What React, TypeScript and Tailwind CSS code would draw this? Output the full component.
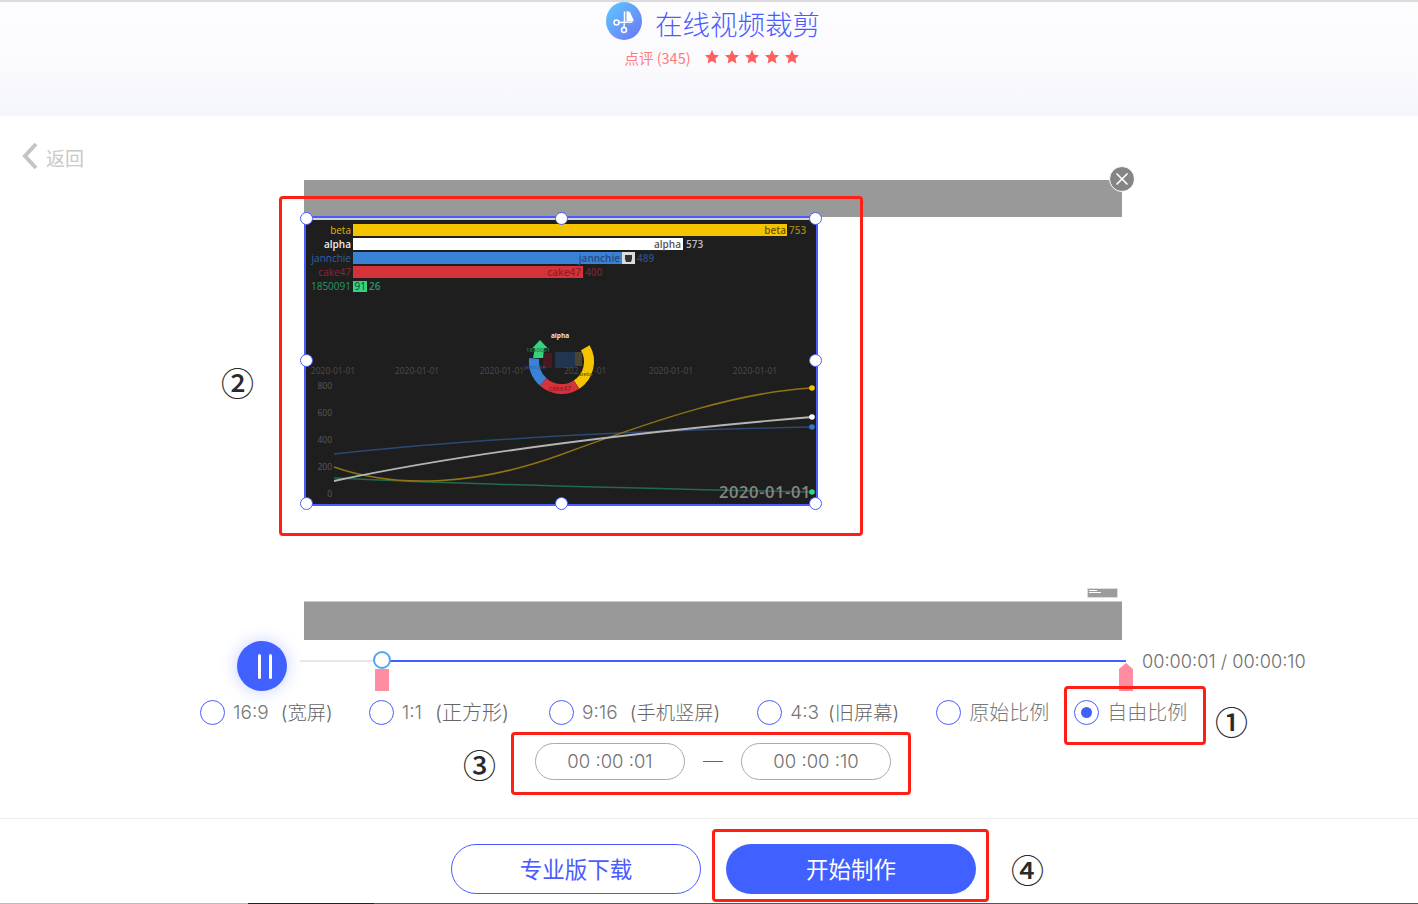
import React from "react";
import { X } from "lucide-react";

const ratios = [
  { label: "16:9", note: "(宽屏)", noteCls: "ml-[12px] text-[19.3px]", cls: "mr-[36px]" },
  { label: "1:1", note: "(正方形)", noteCls: "ml-[13px] text-[20px]", cls: "mr-[40px]" },
  { label: "9:16", note: "(手机竖屏)", noteCls: "ml-[12px] text-[19.3px]", cls: "mr-[37px]" },
  { label: "4:3", note: "(旧屏幕)", noteCls: "ml-[9px] text-[19.3px]", cls: "mr-[37px]" },
  { label: "原始比例", note: "", noteCls: "", cls: "mr-[25px]" },
  { label: "自由比例", note: "", noteCls: "", cls: "", active: true },
];

const handles = [
  "left-[-4px] top-[32px]",
  "left-[251px] top-[32px]",
  "left-[505px] top-[32px]",
  "left-[-4px] top-[174px]",
  "left-[505px] top-[174px]",
  "left-[-4px] top-[317px]",
  "left-[251px] top-[317px]",
  "left-[505px] top-[317px]",
];

const Star = () => (
  <svg width="16" height="16" viewBox="0 0 24 24" className="fill-[#ff5f5f]">
    <path d="M12 1.5l3.2 7 7.3.8-5.4 5 1.5 7.6L12 18.1l-6.6 3.8 1.5-7.6-5.4-5 7.3-.8z" />
  </svg>
);

const Logo = () => (
  <svg width="36" height="38" viewBox="0 0 36 38">
    <defs>
      <linearGradient id="logo" x1="0" y1="0" x2="1" y2="1">
        <stop offset="0" stopColor="#5ccbff" />
        <stop offset="1" stopColor="#6f72f6" />
      </linearGradient>
    </defs>
    <ellipse cx="18" cy="19" rx="18" ry="19" fill="url(#logo)" />
    <path d="M20.5 9l3.5 1 4 9h-7.5z" fill="#fff" />
    <path d="M18.5 9.5v10.500" stroke="#fff" strokeWidth="1.5" fill="none" />
    <path d="M12.500 20.500l14 -.5M18.500 20l-.5 5" stroke="#fff" strokeWidth="1.5" fill="none" />
    <circle cx="10.500" cy="20.500" r="2.500" stroke="#fff" strokeWidth="1.500" fill="none" />
    <circle cx="18" cy="28" r="2.500" stroke="#fff" strokeWidth="1.500" fill="none" />
  </svg>
);

// the video frame is a picture: everything in here is in page coordinates
const VideoFrame = () => (
  <svg width="513" height="288" viewBox="304 217 513 288" className="block bg-[#1f1e1f]" fontFamily="'Open Sans', sans-serif">
    <rect x="304" y="217" width="513" height="3" fill="#d4d4d4" />
    <rect x="353" y="224" width="434" height="12" fill="#f5c400" />
    <rect x="353" y="238" width="330" height="12" fill="#fff" />
    <rect x="353" y="252" width="270" height="12" fill="#3a82d6" />
    <rect x="622" y="252" width="13" height="12" fill="#dcdcdc" />
    <path d="M625 255h7v4l-1 3h-5l-1-3z" fill="#333" />
    <rect x="353" y="266" width="230" height="12" fill="#d5323a" />
    <rect x="353" y="281" width="14" height="11" fill="#35d27f" />

    <g fontSize="10" textAnchor="end">
      <text x="351" y="234" fill="#e0b400">beta</text>
      <text x="351" y="248" fill="#eeeeee" fontWeight="600">alpha</text>
      <text x="351" y="262" fill="#2f62a5">jannchie</text>
      <text x="351" y="276" fill="#8f2530">cake47</text>
      <text x="351" y="290" fill="#2a9a62">1850091</text>
      <text x="366" y="290" fill="#17442d">91</text>
      <text x="786" y="234" fill="#6d5a00" fontWeight="600">beta</text>
      <text x="681" y="248" fill="#555" fontWeight="600">alpha</text>
      <text x="620" y="262" fill="#234c80" fontWeight="600">jannchie</text>
      <text x="581" y="276" fill="#8f2028" fontWeight="600">cake47</text>
    </g>
    <g fontSize="10" fontWeight="600">
      <text x="789" y="234" fill="#9a8318">753</text>
      <text x="686" y="248" fill="#bdbdbd">573</text>
      <text x="637" y="262" fill="#2c4f80">489</text>
      <text x="585" y="276" fill="#7d222b">400</text>
      <text x="369" y="290" fill="#2a9a62">26</text>
    </g>

    <g fontSize="8.500" fill="#4c4c4c" textAnchor="middle">
      <text x="333" y="374">2020-01-01</text>
      <text x="417" y="374">2020-01-01</text>
      <text x="502" y="374">2020-01-01</text>
      <text x="671" y="374">2020-01-01</text>
      <text x="755" y="374">2020-01-01</text>
    </g>
    <g fontSize="8.500" fill="#5a5a5a" textAnchor="end">
      <text x="332" y="389">800</text>
      <text x="332" y="416">600</text>
      <text x="332" y="443">400</text>
      <text x="332" y="470">200</text>
      <text x="332" y="497">0</text>
    </g>

    <g fill="none" strokeWidth="1.500">
      <path d="M334 454C480 438 660 430 812 427" stroke="#2a4a73" />
      <path d="M334 478C480 485 660 489 812 492" stroke="#23694a" />
      <path d="M334 467C400 490 480 484 560 455C660 418 740 392 812 388" stroke="#8d7414" />
      <path d="M334 481C480 450 660 430 812 417" stroke="#b5b5b5" strokeWidth="1.800" />
    </g>
    <circle cx="812" cy="388" r="2.800" fill="#f5c400" />
    <circle cx="812" cy="417" r="2.800" fill="#fff" />
    <circle cx="812" cy="427" r="2.800" fill="#2f7bc8" />
    <circle cx="812" cy="492" r="2.800" fill="#35d27f" />
    <text x="719" y="498" fontSize="16.500" fontWeight="600" letterSpacing="0.600" fill="#858585">2020-01-01</text>

    {/* little donut in the middle of the frame */}
    <rect x="543" y="353" width="9" height="15" fill="#4a1a22" />
    <rect x="555" y="352" width="20" height="16" fill="#1f3550" />
    <rect x="575" y="352" width="7" height="14" fill="#4a4530" />
    <g fill="none" strokeWidth="10">
      <path d="M585.300 347.750A27.500 27.500 0 0 1 576.600 384.600" stroke="#f5c400" />
      <path d="M576.600 384.600A27.500 27.500 0 0 1 543.100 381.900" stroke="#d5323a" />
      <path d="M543.100 381.900A27.500 27.500 0 0 1 534.100 358.600" stroke="#3a82d6" />
    </g>
    <path d="M540 340l7.500 8H544l-1 10h-10l2-10h-2.500z" fill="#35d27f" />
    <text x="560" y="338" fontSize="6.500" fontWeight="700" fill="#e8e8e8" textAnchor="middle">alpha</text>
    <text x="538" y="352" fontSize="6" fontWeight="600" fill="#1f7a4c" textAnchor="middle">1850091</text>
    <text x="535" y="369" fontSize="5.500" fill="#2a5fa8" textAnchor="middle">jannchie</text>
    <text x="560" y="391" fontSize="6.500" fontWeight="600" fill="#8f2028" textAnchor="middle">cake47</text>
    {/* the donut's label sits in the middle of this date tick */}
    <g fontSize="8.500" fill="#4c4c4c">
      <text x="564" y="374">202</text>
      <text x="594" y="374">-01</text>
    </g>
    <text x="586" y="376" fontSize="6" fontWeight="600" fill="#6d5a00" textAnchor="middle">beta</text>
  </svg>
);

const circled = "absolute text-[33px] leading-[44px] font-medium text-[#2a2a2a] font-['Noto_Sans_CJK_SC',sans-serif]";
const redBox = "absolute border-[3px] border-[#ff2015] rounded-[4px]";

export default function App() {
  return (
    <div className="relative w-[1418px] h-[904px] overflow-hidden bg-white text-[#777] font-['Liberation_Sans','Noto_Sans_CJK_SC',sans-serif]">
      <header className="h-[116px] border-t-2 border-[#dcdce0] bg-gradient-to-b from-[#fdfdfe] via-[#fbfbfe] to-[#f5f6fd] flex flex-col items-center font-['Noto_Sans_CJK_SC',sans-serif]">
        <div className="flex items-start gap-[13px] ml-[8px]">
          <Logo />
          <span className="text-[27.5px] leading-[38px] pt-[2px] font-light text-[#4a5cff]">在线视频裁剪</span>
        </div>
        <div className="flex items-center mt-[6px] ml-[6px]">
          <span className="text-[14.5px] leading-[20px] text-[#ff7b7b] mr-[13px]">点评 (345)</span>
          <div className="flex gap-[4px] -mt-[2px]">
            <Star />
            <Star />
            <Star />
            <Star />
            <Star />
          </div>
        </div>
      </header>

      <div className="h-[64px] flex items-start pt-[26px] pl-[21px] font-['Noto_Sans_CJK_SC',sans-serif]">
        <svg width="17" height="28" viewBox="0 0 17 28" className="fill-none stroke-[#c4c4c4] stroke-[4px]">
          <path d="M15 2L4 14l11 12" />
        </svg>
        <span className="ml-[8px] text-[19px] leading-[32px] text-[#c9c9c9]">返回</span>
      </div>

      <div className="relative ml-[304px] w-[818px] h-[460px] flex flex-col">
        <div className="h-[37px] bg-[#999]" />
        <div className="relative h-[384px]">
          <VideoFrame />
          <div className="absolute left-[783px] top-[371px] w-[31px] h-[10px] bg-[#9c9c9c] border border-[#ddd] flex flex-col gap-[1px] p-[1px]">
            <span className="w-[8px] h-px bg-white" />
            <span className="w-[12px] h-px bg-white" />
          </div>
        </div>
        <div className="h-[39px] bg-[#999] border-t border-[#ccc]" />

        <button className="absolute right-[-13px] top-[-14px] w-[26px] h-[26px] rounded-full bg-[#858585] border border-white flex items-center justify-center">
          <X size={20} strokeWidth={2} className="text-white" />
        </button>
        <div className="absolute left-0 top-[36px] w-[514px] h-[290px] border-2 border-[#4a5cff]" />
        <div className="absolute left-0 top-0 w-0 h-0">
          {handles.map((h) => (
            <div key={h} className={`absolute ${h} w-[13px] h-[13px] rounded-full bg-white border border-[#4a5cff]`} />
          ))}
        </div>
      </div>

      <div className="relative h-[52px] ml-[237px] flex items-start">
        <button className="mt-[1px] w-[50px] h-[50px] rounded-full bg-[#4060ff] shadow-[0_0_16px_rgba(64,96,255,0.3)] flex items-center justify-center gap-[8px] pl-[6px]">
          <span className="w-[3px] h-[25px] rounded-full bg-white" />
          <span className="w-[3px] h-[25px] rounded-full bg-white" />
        </button>
        <div className="relative ml-[13px] w-[826px] mt-[20px] h-[2px] bg-[#e8e8e8]">
          <div className="absolute left-[82px] right-0 top-0 h-[2px] bg-[#4060ff]" />
          <div className="absolute left-[73px] top-[-9px] w-[18px] h-[18px] rounded-full bg-white border-2 border-[#54a5f0]" />
          <div className="absolute left-[75px] top-[9px] w-[14px] h-[22px] bg-[#ff8da1]" />
          <svg className="absolute left-[819px] top-[3px]" width="14" height="28" viewBox="0 0 14 28">
            <path d="M7 0l7 6v22H0V6z" fill="#ff8da1" />
          </svg>
        </div>
        <span className="ml-[16px] mt-[8px] text-[18.2px] leading-[26px] font-['Inter',sans-serif] font-light text-[#6f6f6f] whitespace-nowrap">
          00:00:01 / 00:00:10
        </span>
      </div>

      <div className="flex items-center pl-[200px] mt-[8px] h-[25px] font-['Inter','Noto_Sans_CJK_SC',sans-serif] font-light text-[19px]">
        {ratios.map((r) => (
          <label key={r.label} className={`flex items-center ${r.cls}`}>
            <span className="w-[25px] h-[25px] rounded-full border border-[#4a5cff] flex items-center justify-center mr-[8px]">
              {r.active && <span className="w-[11px] h-[11px] rounded-full bg-[#4060ff]" />}
            </span>
            <span className={`text-[#777] whitespace-nowrap pt-[1px] ${r.note ? "" : "text-[20px]"}`}>{r.label}</span>
            {r.note && <span className={`${r.noteCls} text-[#666] whitespace-nowrap pt-[1px]`}>{r.note}</span>}
          </label>
        ))}
      </div>

      <div className="flex items-center mt-[18px] ml-[535px] font-['Inter',sans-serif] font-light text-[18.5px] text-[#6f6f6f]">
        <div className="w-[150px] h-[37px] rounded-full border border-[#aaa] flex items-center justify-center pt-[1px]">00 :00 :01</div>
        <div className="w-[20px] h-px bg-[#666] mx-[18px]" />
        <div className="w-[150px] h-[37px] rounded-full border border-[#aaa] flex items-center justify-center pt-[1px]">00 :00 :10</div>
      </div>

      <div className="mt-[38px] border-t border-[#eeeeee] flex pt-[25px] pl-[451px] gap-[25px] font-['Noto_Sans_CJK_SC',sans-serif] text-[22.5px]">
        <button className="w-[250px] h-[50px] rounded-full border border-[#4a5cff] text-[#4a5cff]">专业版下载</button>
        <button className="w-[250px] h-[50px] rounded-full bg-[#4060ff] text-white">开始制作</button>
      </div>

      <div className="absolute left-0 right-0 bottom-0 h-px flex">
        <div className="w-[248px] bg-[#bbb]" />
        <div className="w-[126px] bg-[#222]" />
        <div className="flex-1 bg-[#555]" />
      </div>

      {/* red annotation boxes and numbers on top of the page */}
      <div className={`${redBox} left-[279px] top-[196px] w-[584px] h-[340px]`} />
      <div className={`${redBox} left-[1064px] top-[686px] w-[142px] h-[59px]`} />
      <div className={`${redBox} left-[511px] top-[732px] w-[400px] h-[63px]`} />
      <div className={`${redBox} left-[712px] top-[829px] w-[277px] h-[73px]`} />
      <span className={`${circled} left-[221px] top-[360px]`}>②</span>
      <span className={`${circled} left-[1215px] top-[699px]`}>①</span>
      <span className={`${circled} left-[463px] top-[742px]`}>③</span>
      <span className={`${circled} left-[1011px] top-[847px]`}>④</span>
    </div>
  );
}
